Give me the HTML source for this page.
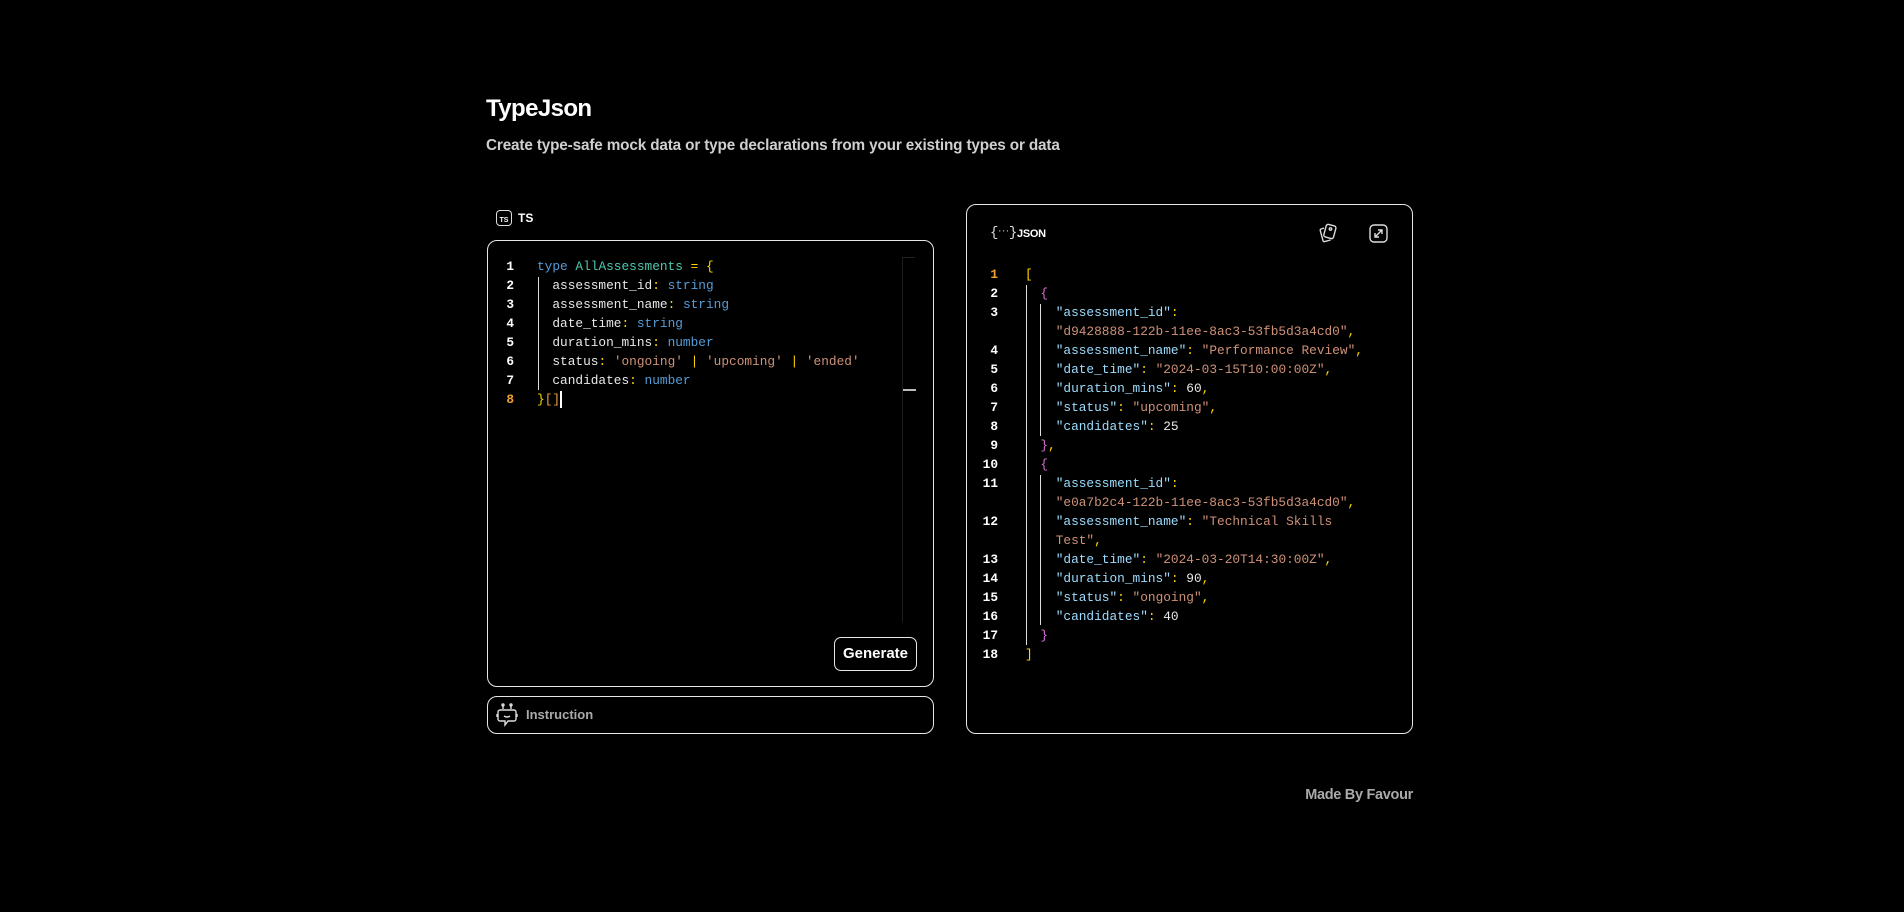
<!DOCTYPE html>
<html><head><meta charset="utf-8"><style>
*{margin:0;padding:0;box-sizing:border-box}
body{width:1904px;height:912px;background:#000;color:#fff;font-family:"Liberation Sans",sans-serif;position:relative;overflow:hidden}
.a{position:absolute}
.box{position:absolute;border:1.5px solid #e6e6e6;border-radius:10px}
.code{font-family:"Liberation Mono","DejaVu Sans Mono",monospace;font-size:12.8px;white-space:pre;line-height:19px;height:19px}
.ln{position:absolute;width:20px;text-align:right;font-family:"Liberation Mono",monospace;font-size:12.8px;line-height:19px;color:#fff;font-weight:bold}
.k{color:#569cd6}.t{color:#4ec9b0}.y{color:#ffd700}.p{color:#e8e8e8}.s{color:#ce9178}.key{color:#9cdcfe}.m{color:#da70d6}.o{color:#f0a030}
.g{position:absolute;width:1px;background:#ddd}
</style></head><body>
<div class="a" style="left:486px;top:95px;font-size:24px;font-weight:bold;letter-spacing:-0.6px">TypeJson</div>
<div class="a" style="left:486px;top:137px;font-size:15.3px;font-weight:bold;color:#cfcfcf;letter-spacing:-0.15px">Create type-safe mock data or type declarations from your existing types or data</div>

<div class="a" style="left:496px;top:210px;width:16px;height:16px;border:1.5px solid #ddd;border-radius:4px;font-size:7px;font-weight:bold;text-align:center;line-height:15px;padding-top:2px">TS</div>
<div class="a" style="left:518px;top:211px;font-size:12px;font-weight:bold">TS</div>

<div class="box" style="left:487px;top:240px;width:447px;height:447px"></div>
<div class="a" style="left:902px;top:257px;width:1px;height:365px;background:#1c1c1c"></div>
<div class="a" style="left:903px;top:257px;width:12px;height:1px;background:#222"></div>
<div class="a" style="left:903px;top:389px;width:13px;height:2px;background:#bbb"></div>

<div class="ln" style="left:494px;top:257px">1</div>
<div class="ln" style="left:494px;top:276px">2</div>
<div class="ln" style="left:494px;top:295px">3</div>
<div class="ln" style="left:494px;top:314px">4</div>
<div class="ln" style="left:494px;top:333px">5</div>
<div class="ln" style="left:494px;top:352px">6</div>
<div class="ln" style="left:494px;top:371px">7</div>
<div class="ln o" style="left:494px;top:390px">8</div>
<div class="g" style="left:538px;top:277px;height:113px"></div>
<div class="a code" style="left:537px;top:257px"><span class="k">type</span> <span class="t">AllAssessments</span> <span class="y">=</span> <span class="y">{</span></div>
<div class="a code p" style="left:537px;top:276px">  assessment_id<span class="y">:</span> <span class="k">string</span></div>
<div class="a code p" style="left:537px;top:295px">  assessment_name<span class="y">:</span> <span class="k">string</span></div>
<div class="a code p" style="left:537px;top:314px">  date_time<span class="y">:</span> <span class="k">string</span></div>
<div class="a code p" style="left:537px;top:333px">  duration_mins<span class="y">:</span> <span class="k">number</span></div>
<div class="a code p" style="left:537px;top:352px">  status<span class="y">:</span> <span class="s">'ongoing'</span> <span class="y">|</span> <span class="s">'upcoming'</span> <span class="y">|</span> <span class="s">'ended'</span></div>
<div class="a code p" style="left:537px;top:371px">  candidates<span class="y">:</span> <span class="k">number</span></div>
<div class="a code" style="left:537px;top:390px"><span class="y">}</span><span class="o">[]</span></div>
<div class="a" style="left:560px;top:391px;width:2px;height:17px;background:#fff"></div>

<div class="a" style="left:834px;top:637px;width:83px;height:34px;border:1.5px solid #e6e6e6;border-radius:7px;font-size:15px;font-weight:bold;text-align:center;line-height:31px">Generate</div>

<div class="box" style="left:487px;top:696px;width:447px;height:38px"></div>
<svg class="a" style="left:496px;top:703px" width="22" height="24" viewBox="0 0 22 24" fill="none" stroke="#ddd" stroke-width="1.4"><path d="M7 2v4M15 2v4"/><circle cx="7" cy="2" r="1"/><circle cx="15" cy="2" r="1"/><path d="M4 7h14a2 2 0 0 1 2 2v7a2 2 0 0 1-2 2h-6l-3 4v-4H4a2 2 0 0 1-2-2V9a2 2 0 0 1 2-2z"/><path d="M8 13q3 2 6 0"/><path d="M1 11v3M21 11v3"/></svg>
<div class="a" style="left:526px;top:707px;font-size:13px;font-weight:bold;color:#aaa">Instruction</div>

<div class="box" style="left:966px;top:204px;width:447px;height:530px"></div>
<div class="a" style="left:990px;top:225px;font-family:'Liberation Mono',monospace;font-size:14px;color:#ddd;letter-spacing:-1px">{<span style="font-size:8px;vertical-align:3px">···</span>}</div>
<div class="a" style="left:1017px;top:228px;font-size:11px;font-weight:bold;letter-spacing:-0.3px">JSON</div>
<svg class="a" style="left:1317px;top:222px" width="22" height="22" viewBox="0 0 22 22" fill="none" stroke="#ddd" stroke-width="1.4"><rect x="8" y="3" width="10" height="13" rx="2" transform="rotate(15 13 9)"/><path d="M7 6l-3 1q-1 .5-.7 1.7l2.7 10q.4 1.2 1.6.9l6-1.6"/><circle cx="13.5" cy="7" r="1.2"/></svg>
<svg class="a" style="left:1369px;top:224px" width="19" height="19" viewBox="0 0 19 19" fill="none" stroke="#ddd" stroke-width="1.4"><rect x="1" y="1" width="17" height="17" rx="4"/><path d="M6 13l7-7M9 6h4v4M6 9v4h4"/></svg>

<div class="ln o" style="left:978px;top:265px">1</div>
<div class="ln" style="left:978px;top:284px">2</div>
<div class="ln" style="left:978px;top:303px">3</div>
<div class="ln" style="left:978px;top:341px">4</div>
<div class="ln" style="left:978px;top:360px">5</div>
<div class="ln" style="left:978px;top:379px">6</div>
<div class="ln" style="left:978px;top:398px">7</div>
<div class="ln" style="left:978px;top:417px">8</div>
<div class="ln" style="left:978px;top:436px">9</div>
<div class="ln" style="left:978px;top:455px">10</div>
<div class="ln" style="left:978px;top:474px">11</div>
<div class="ln" style="left:978px;top:512px">12</div>
<div class="ln" style="left:978px;top:550px">13</div>
<div class="ln" style="left:978px;top:569px">14</div>
<div class="ln" style="left:978px;top:588px">15</div>
<div class="ln" style="left:978px;top:607px">16</div>
<div class="ln" style="left:978px;top:626px">17</div>
<div class="ln" style="left:978px;top:645px">18</div>
<div class="g" style="left:1026px;top:285px;height:360px"></div>
<div class="g" style="left:1040px;top:304px;height:132px"></div>
<div class="g" style="left:1040px;top:475px;height:150px"></div>

<div class="a code" style="left:1025px;top:265px"><span class="y">[</span></div>
<div class="a code" style="left:1025px;top:284px">  <span class="m">{</span></div>
<div class="a code" style="left:1025px;top:303px">    <span class="key">"assessment_id"</span><span class="y">:</span></div>
<div class="a code" style="left:1025px;top:322px">    <span class="s">"d9428888-122b-11ee-8ac3-53fb5d3a4cd0"</span><span class="y">,</span></div>
<div class="a code" style="left:1025px;top:341px">    <span class="key">"assessment_name"</span><span class="y">:</span> <span class="s">"Performance Review"</span><span class="y">,</span></div>
<div class="a code" style="left:1025px;top:360px">    <span class="key">"date_time"</span><span class="y">:</span> <span class="s">"2024-03-15T10:00:00Z"</span><span class="y">,</span></div>
<div class="a code" style="left:1025px;top:379px">    <span class="key">"duration_mins"</span><span class="y">:</span> <span class="p">60</span><span class="y">,</span></div>
<div class="a code" style="left:1025px;top:398px">    <span class="key">"status"</span><span class="y">:</span> <span class="s">"upcoming"</span><span class="y">,</span></div>
<div class="a code" style="left:1025px;top:417px">    <span class="key">"candidates"</span><span class="y">:</span> <span class="p">25</span></div>
<div class="a code" style="left:1025px;top:436px">  <span class="m">}</span><span class="y">,</span></div>
<div class="a code" style="left:1025px;top:455px">  <span class="m">{</span></div>
<div class="a code" style="left:1025px;top:474px">    <span class="key">"assessment_id"</span><span class="y">:</span></div>
<div class="a code" style="left:1025px;top:493px">    <span class="s">"e0a7b2c4-122b-11ee-8ac3-53fb5d3a4cd0"</span><span class="y">,</span></div>
<div class="a code" style="left:1025px;top:512px">    <span class="key">"assessment_name"</span><span class="y">:</span> <span class="s">"Technical Skills</span></div>
<div class="a code" style="left:1025px;top:531px">    <span class="s">Test"</span><span class="y">,</span></div>
<div class="a code" style="left:1025px;top:550px">    <span class="key">"date_time"</span><span class="y">:</span> <span class="s">"2024-03-20T14:30:00Z"</span><span class="y">,</span></div>
<div class="a code" style="left:1025px;top:569px">    <span class="key">"duration_mins"</span><span class="y">:</span> <span class="p">90</span><span class="y">,</span></div>
<div class="a code" style="left:1025px;top:588px">    <span class="key">"status"</span><span class="y">:</span> <span class="s">"ongoing"</span><span class="y">,</span></div>
<div class="a code" style="left:1025px;top:607px">    <span class="key">"candidates"</span><span class="y">:</span> <span class="p">40</span></div>
<div class="a code" style="left:1025px;top:626px">  <span class="m">}</span></div>
<div class="a code" style="left:1025px;top:645px"><span class="y">]</span></div>

<div class="a" style="left:1213px;width:200px;text-align:right;top:787px;font-size:14.5px;font-weight:bold;color:#aaa;letter-spacing:-0.3px">Made By Favour</div>
</body></html>
